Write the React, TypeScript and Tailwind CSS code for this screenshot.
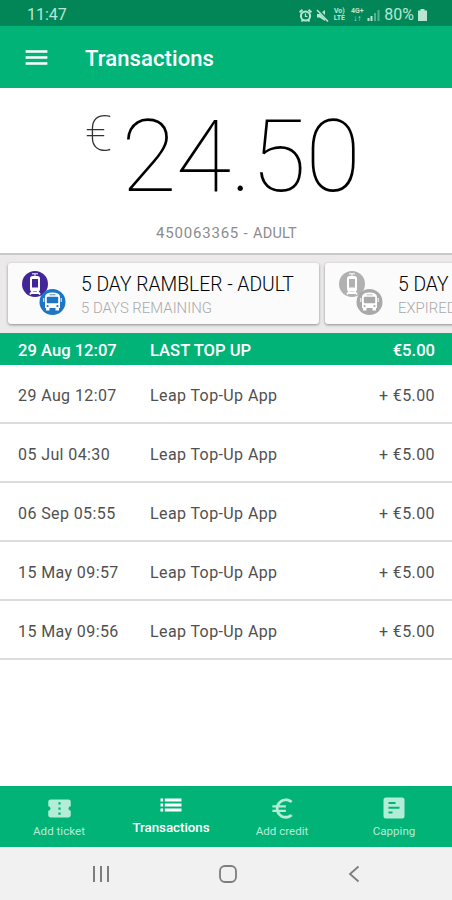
import { MdConfirmationNumber, MdEuroSymbol, MdMenu } from 'react-icons/md';

const transactions = [
  { date: '29 Aug 12:07', title: 'Leap Top-Up App', amount: '+ €5.00' },
  { date: '05 Jul 04:30', title: 'Leap Top-Up App', amount: '+ €5.00' },
  { date: '06 Sep 05:55', title: 'Leap Top-Up App', amount: '+ €5.00' },
  { date: '15 May 09:57', title: 'Leap Top-Up App', amount: '+ €5.00' },
  { date: '15 May 09:56', title: 'Leap Top-Up App', amount: '+ €5.00' },
];

const tickets = [
  { title: '5 DAY RAMBLER - ADULT', status: '5 DAYS REMAINING', tram: '#43259a', bus: '#1d75c4' },
  { title: '5 DAY', status: 'EXPIRED', tram: '#b1b1b1', bus: '#a9a9a9' },
];

const CappingIcon = () => (
  <svg width="22" height="22" viewBox="0 0 22 22">
    <rect x="0.5" y="0.5" width="21" height="21" rx="2.5" fill="currentColor" />
    <path d="M5.5 6h7M5.5 10.7h11M5.5 15.5h4" stroke="#02b377" strokeWidth="2" />
  </svg>
);

const ListIcon = () => (
  <svg width="22" height="14" viewBox="0 0 22 14" stroke="currentColor" strokeWidth="3">
    <path d="M0.5 2h2.6M0.5 7h2.6M0.5 12h2.6M4.8 2h16.700M4.8 7h16.700M4.8 12h16.700" />
  </svg>
);

const tabs = [
  { label: 'Add ticket', icon: <MdConfirmationNumber size={27} /> },
  { label: 'Transactions', icon: <ListIcon />, active: true },
  { label: 'Add credit', icon: <MdEuroSymbol size={27} /> },
  { label: 'Capping', icon: <CappingIcon /> },
];

function TicketIcon({ tram, bus }: { tram: string; bus: string }) {
  return (
    <svg width="46" height="46" viewBox="0 0 46 46" className="shrink-0">
      <circle cx="14" cy="14" r="13" fill={tram} />
      <path d="M11 3.8h6M14 4v3" stroke="#fff" strokeWidth="1" />
      <rect x="9" y="6" width="10" height="15.5" rx="2.5" fill="#fff" />
      <rect x="11" y="9" width="6" height="8.5" fill={tram} />
      <path d="M11.5 21l-2.5 3.5M16.5 21l2.5 3.5M10 23h8" stroke="#fff" strokeWidth="1.8" />
      <circle cx="31.5" cy="32" r="13" fill={bus} />
      <path
        d="M24 27q0-4.5 7.5-4.5t7.5 4.500v11h-1v2.500h-3.500v-2.500h-6v2.500h-3.500v-2.500h-1z"
        fill="#fff"
      />
      <path d="M22.800 28v4M40.200 28v4" stroke="#fff" strokeWidth="1" />
      <path d="M28.500 24.800h6" stroke={bus} strokeWidth="0.800" />
      <rect x="25.800" y="26.800" width="11.400" height="6.400" rx="0.800" fill={bus} />
      <circle cx="26.600" cy="36" r="1.100" fill={bus} />
      <circle cx="36.400" cy="36" r="1.100" fill={bus} />
    </svg>
  );
}

function StatusBar() {
  return (
    <div className="flex h-[26px] items-center justify-between bg-[#028658] pt-1 pr-[25px] pl-[27px] text-[#b8e6d2]">
      <span className="text-[16px] leading-none">11:47</span>
      <div className="flex items-center">
        <svg width="13" height="13" viewBox="0 0 13 13" className="mr-1" fill="none" stroke="currentColor">
          <circle cx="6.5" cy="7" r="4.6" strokeWidth="2" />
          <path d="M0.5 3.200l3-2.500M12.500 3.200l-3-2.500M2.500 12.500l1.300-1.500M10.500 12.500l-1.300-1.500" strokeWidth="1.800" />
          <path d="M6.500 4.500v3h2" strokeWidth="1.200" />
        </svg>
        <svg width="13" height="13" viewBox="0 0 13 13" className="mr-[3px]">
          <path d="M1 5h2.500L9 1v11L3.500 8.500H1z" fill="currentColor" />
          <path d="M1.500 0.500l11 11.500" stroke="#028658" strokeWidth="3" />
          <path d="M1 1l11 11.500" stroke="currentColor" strokeWidth="1.600" />
        </svg>
        <div className="mr-1 w-[14px] text-center text-[7px] leading-[7px] font-bold">
          <div>Vo)</div>
          <div>LTE</div>
        </div>
        <div className="mr-[3px] w-[14px] text-center text-[7px] leading-[7px] font-bold">
          <div>4G+</div>
          <div className="text-[8px]">↓↑</div>
        </div>
        <svg width="13" height="12" viewBox="0 0 13 12" className="mr-1">
          <path d="M1.500 12V9M4.500 12V7" stroke="currentColor" strokeWidth="2" />
          <path d="M8 12V4M11.500 12V1" stroke="currentColor" strokeWidth="2" opacity="0.45" />
        </svg>
        <span className="text-[16px] leading-none">80%</span>
        <svg width="9" height="12" viewBox="0 0 9 12" className="ml-1">
          <path d="M2.500 0h4v1.500H9V12H0V1.500h2.500z" fill="currentColor" />
        </svg>
      </div>
    </div>
  );
}

export default function App() {
  return (
    <div className="flex h-[900px] w-[452px] flex-col overflow-hidden bg-white font-['Roboto',sans-serif]">
      <StatusBar />

      <header className="flex h-[62px] items-center bg-[#02b377] pl-[22px] text-white">
        <MdMenu size={29} />
        <h1 className="ml-[34px] pt-1 text-[22px] leading-none font-medium tracking-[0.1px]">
          Transactions
        </h1>
      </header>

      <section className="flex h-[165px] flex-col items-center">
        <div className="flex items-start pt-[17px] pr-[7px] text-black">
          <span className="mt-1 mr-[9px] text-[50px] leading-[50px] font-thin text-[#333]">€</span>
          <span className="text-[101px] leading-[104px] font-thin tracking-[-0.8px]">24.50</span>
        </div>
        <p className="mt-4 pl-px text-[15px] leading-4 tracking-[0.8px] text-[#8c8c8c]">
          450063365 - <span className="text-[14.500px] tracking-[0.2px]">ADULT</span>
        </p>
      </section>

      <section className="flex h-[80px] gap-[6px] border-t-2 border-[#c8c8c8] bg-[#ebe9ea] pt-2 pl-2">
        {tickets.map((ticket) => (
          <div
            key={ticket.status}
            className="flex h-[61px] w-[311px] shrink-0 rounded-[3px] bg-[#fbfbfb] pt-[7px] pl-[13px] shadow-[0_1px_3px_rgba(0,0,0,0.4)]"
          >
            <TicketIcon tram={ticket.tram} bus={ticket.bus} />
            <div className="ml-[14px] pt-[3px] whitespace-nowrap">
              <div className="text-[19.3px] leading-6 font-light text-black">{ticket.title}</div>
              <div className="text-[14.9px] leading-[22px] font-light text-[#aaa]">{ticket.status}</div>
            </div>
          </div>
        ))}
      </section>

      <div className="flex h-8 items-center bg-[#02b377] pt-1 pr-[17px] pl-[18px] text-[16.600px] font-medium text-white">
        <span className="w-[132px]">29 Aug 12:07</span>
        <span className="flex-1">LAST TOP UP</span>
        <span>€5.00</span>
      </div>

      <ul className="flex-1">
        {transactions.map((item) => (
          <li
            key={item.date}
            className="flex h-[59px] items-center border-b-2 border-[#dcdcdc] pt-1 pr-[17px] pl-[18px] text-[16px] tracking-[0.4px] text-[#505050]"
          >
            <span className="w-[132px]">{item.date}</span>
            <span className="flex-1">{item.title}</span>
            <span>{item.amount}</span>
          </li>
        ))}
      </ul>

      <nav className="grid h-[61px] shrink-0 grid-cols-[118px_106px_116px_108px] bg-[#02b377]">
        {tabs.map((tab) => (
          <div
            key={tab.label}
            className={
              tab.active
                ? 'flex flex-col items-center pt-[6px] text-[13.3px] font-medium text-white'
                : 'flex flex-col items-center pt-[9px] text-[11.6px] text-[#b3ecd7]'
            }
          >
            <div className="flex h-[26px] items-center">{tab.icon}</div>
            <span className="mt-[2px] leading-4">{tab.label}</span>
          </div>
        ))}
      </nav>

      <div className="flex h-[53px] shrink-0 items-center bg-[#f1f1f1] pl-[92px] text-[#7d7d7d]">
        <svg width="18" height="18" viewBox="0 0 18 18" stroke="currentColor" strokeWidth="2">
          <path d="M2 1v16M9 1v16M16 1v16" />
        </svg>
        <svg width="18" height="18" viewBox="0 0 18 18" fill="none" stroke="currentColor" strokeWidth="1.8" className="ml-[109px]">
          <rect x="1" y="1" width="16" height="16" rx="5" />
        </svg>
        <svg width="12" height="18" viewBox="0 0 12 18" fill="none" stroke="currentColor" strokeWidth="1.8" className="ml-[111px]">
          <path d="M10.5 1.5L2 9l8.5 7.5" />
        </svg>
      </div>
    </div>
  );
}
